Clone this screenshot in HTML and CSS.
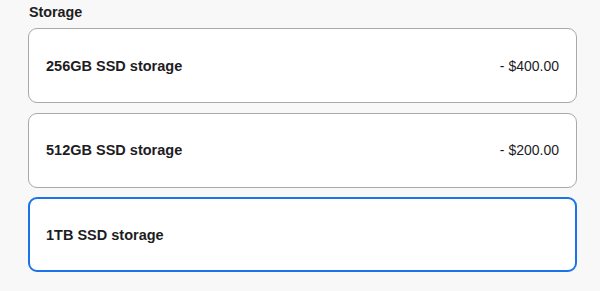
FILE: index.html
```html
<!DOCTYPE html>
<html>
<head>
<meta charset="utf-8">
<link rel="stylesheet" href="styles.css">
</head>
<body>
<section class="storage">
  <h2 class="storage-title">Storage</h2>
  <div class="options">
    <div class="option">
      <span class="option-name">256GB SSD storage</span>
      <span class="option-price">- $400.00</span>
    </div>
    <div class="option">
      <span class="option-name">512GB SSD storage</span>
      <span class="option-price">- $200.00</span>
    </div>
    <div class="option option-selected">
      <span class="option-name">1TB SSD storage</span>
    </div>
  </div>
</section>
</body>
</html>
```
FILE: styles.css
```css
html, body {
  margin: 0;
  padding: 0;
  background: #f8f8f8;
}
body {
  font-family: "Liberation Sans", Arial, sans-serif;
  color: #222;
}
.storage {
  padding: 2px 23px 0 28px;
}
.storage-title {
  margin: 0 0 6px 1px;
  font-size: 14.3px;
  line-height: 20px;
  font-weight: 700;
  color: #1d1d1f;
}
.options {
  display: flex;
  flex-direction: column;
  gap: 9.5px;
}
.option {
  box-sizing: border-box;
  height: 75px;
  display: flex;
  align-items: center;
  justify-content: space-between;
  padding: 0 17px 0 17px;
  background: #fff;
  border: 1px solid #a9a9a9;
  border-radius: 9px;
}
.option-selected {
  border: 2px solid #1a73e8;
  padding: 0 16px 0 16px;
}
.option-name {
  font-size: 14.5px;
  font-weight: 700;
  color: #1d1d1f;
}
.option-price {
  font-size: 14px;
  color: #1d1d1f;
}
```
